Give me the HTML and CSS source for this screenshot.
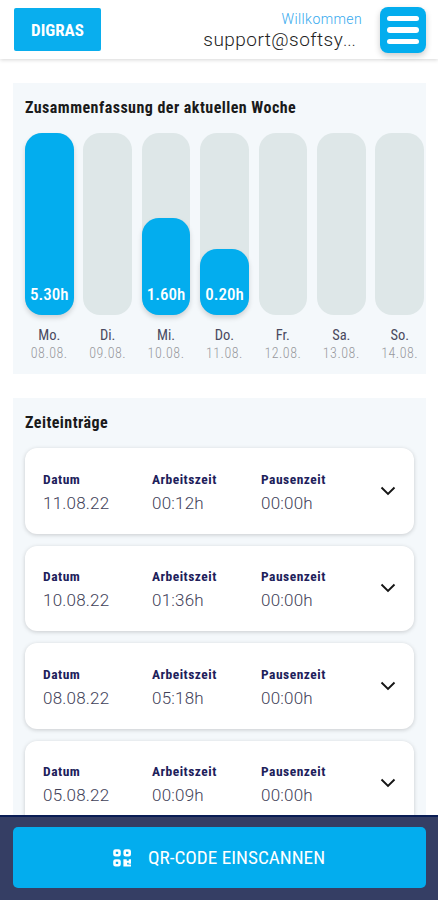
FILE: index.html
```html
<!DOCTYPE html>
<html lang="de">
<head>
  <meta charset="UTF-8">
  <meta name="viewport" content="width=device-width, initial-scale=1.0">
  <title>DIGRAS</title>
  <link rel="stylesheet" href="styles.css">
</head>
<body>

  <header class="header">
    <div class="logo">DIGRAS</div>
    <div class="user">
      <div class="welcome">Willkommen</div>
      <div class="email">support@softsy<span class="dots">...</span></div>
    </div>
    <button class="menu-btn" aria-label="Menü">
      <span></span>
      <span></span>
      <span></span>
    </button>
  </header>

  <main class="content">
    <section class="panel summary">
      <h2>Zusammenfassung der aktuellen Woche</h2>
      <div class="week">
        <div class="day">
          <div class="bar"><div class="fill" style="height: 100%">5.30h</div></div>
          <div class="name">Mo.</div>
          <div class="date">08.08.</div>
        </div>
        <div class="day">
          <div class="bar"></div>
          <div class="name">Di.</div>
          <div class="date">09.08.</div>
        </div>
        <div class="day">
          <div class="bar"><div class="fill" style="height: 53.3%">1.60h</div></div>
          <div class="name">Mi.</div>
          <div class="date">10.08.</div>
        </div>
        <div class="day">
          <div class="bar"><div class="fill" style="height: 36%">0.20h</div></div>
          <div class="name">Do.</div>
          <div class="date">11.08.</div>
        </div>
        <div class="day">
          <div class="bar"></div>
          <div class="name">Fr.</div>
          <div class="date">12.08.</div>
        </div>
        <div class="day">
          <div class="bar"></div>
          <div class="name">Sa.</div>
          <div class="date">13.08.</div>
        </div>
        <div class="day">
          <div class="bar"></div>
          <div class="name">So.</div>
          <div class="date">14.08.</div>
        </div>
      </div>
    </section>

    <section class="panel entries">
      <h2>Zeiteinträge</h2>
      <div class="entry">
        <div class="col"><div class="label">Datum</div><div class="value">11.08.22</div></div>
        <div class="col"><div class="label">Arbeitszeit</div><div class="value">00:12h</div></div>
        <div class="col"><div class="label">Pausenzeit</div><div class="value">00:00h</div></div>
        <svg class="chevron" viewBox="0 0 16 10"><path d="M1.5 1.500 8 8l6.500-6.500"/></svg>
      </div>
      <div class="entry">
        <div class="col"><div class="label">Datum</div><div class="value">10.08.22</div></div>
        <div class="col"><div class="label">Arbeitszeit</div><div class="value">01:36h</div></div>
        <div class="col"><div class="label">Pausenzeit</div><div class="value">00:00h</div></div>
        <svg class="chevron" viewBox="0 0 16 10"><path d="M1.5 1.500 8 8l6.500-6.500"/></svg>
      </div>
      <div class="entry">
        <div class="col"><div class="label">Datum</div><div class="value">08.08.22</div></div>
        <div class="col"><div class="label">Arbeitszeit</div><div class="value">05:18h</div></div>
        <div class="col"><div class="label">Pausenzeit</div><div class="value">00:00h</div></div>
        <svg class="chevron" viewBox="0 0 16 10"><path d="M1.5 1.500 8 8l6.500-6.500"/></svg>
      </div>
      <div class="entry">
        <div class="col"><div class="label">Datum</div><div class="value">05.08.22</div></div>
        <div class="col"><div class="label">Arbeitszeit</div><div class="value">00:09h</div></div>
        <div class="col"><div class="label">Pausenzeit</div><div class="value">00:00h</div></div>
        <svg class="chevron" viewBox="0 0 16 10"><path d="M1.5 1.500 8 8l6.500-6.500"/></svg>
      </div>
    </section>
  </main>

  <footer class="footer">
    <button class="scan-btn">
      <svg class="qr" viewBox="0 0 19 18">
        <g fill="none" stroke="#fff" stroke-width="2.600">
          <rect x="1.500" y="1.500" width="5" height="4.700" rx="1"/>
          <rect x="11.700" y="1.500" width="5" height="4.700" rx="1"/>
          <rect x="1.500" y="11.500" width="5" height="4.700" rx="1"/>
        </g>
        <path fill="#fff" d="M10.400 10.200h3.300v1.500h2.100v-1.500H18v4.500h-2.300v-1h-1.600v1.800H18v2h-7.600z"/>
      </svg>
      <span>QR-CODE EINSCANNEN</span>
    </button>
  </footer>

</body>
</html>
```
FILE: styles.css
```css
* {
  box-sizing: border-box;
}

body {
  margin: 0;
  height: 100vh;
  display: flex;
  flex-direction: column;
  overflow: hidden;
  background-color: #fff;
  font-family: "Roboto Condensed", Roboto, sans-serif;
  font-stretch: 75%;
}

button {
  border: none;
  padding: 0;
  font: inherit;
  cursor: pointer;
}

.header {
  flex: none;
  height: 59px;
  display: flex;
  align-items: flex-start;
  padding: 7px 12px 0 14px;
  box-shadow: 0 1px 4px rgba(0, 0, 0, 0.16);
}

.logo {
  width: 87px;
  height: 43px;
  margin-top: 1px;
  border-radius: 2px;
  background-color: #09aeee;
  color: #fff;
  font-size: 17px;
  font-weight: 700;
  line-height: 44px;
  text-align: center;
}

.user {
  margin-left: auto;
  margin-right: 18px;
  text-align: right;
  font-family: Roboto, sans-serif;
  font-stretch: 100%;
}

.welcome {
  margin-top: 3px;
  color: #35a9ee;
  font-size: 14px;
  font-weight: 300;
  line-height: 18px;
  letter-spacing: 0.4px;
}

.email {
  margin-right: 6px;
  color: #222;
  font-size: 19px;
  font-weight: 350;
  line-height: 23px;
  letter-spacing: 0.45px;
}

.dots {
  font-weight: 300;
  font-size: 16px;
}

.menu-btn {
  width: 46px;
  height: 46px;
  display: flex;
  flex-direction: column;
  align-items: center;
  justify-content: center;
  gap: 6px;
  border-radius: 8px;
  background-color: #03adee;
  box-shadow: 0 3px 6px rgba(0, 0, 0, 0.2);
}

.menu-btn span {
  width: 32px;
  height: 5.5px;
  border-radius: 3px;
  background-color: #fff;
}

.content {
  flex: 1;
  min-height: 0;
  overflow: hidden;
  padding: 24px 12px 0 13px;
}

.panel {
  padding: 0 12px;
  background-color: #f4f8fb;
}

.panel h2 {
  margin: 0;
  color: #1a1a1a;
  font-size: 16px;
  font-weight: 700;
  line-height: 50px;
  letter-spacing: 0.46px;
}

.summary {
  height: 291px;
  margin-bottom: 24px;
  padding-right: 2px;
}

.week {
  display: flex;
  justify-content: space-between;
}

.day {
  width: 48.5px;
  text-align: center;
}

.bar {
  height: 182px;
  display: flex;
  align-items: flex-end;
  margin-bottom: 11px;
  border-radius: 17px;
  background-color: #dee7e8;
}

.fill {
  width: 100%;
  display: flex;
  align-items: flex-end;
  justify-content: center;
  padding-bottom: 11px;
  border-radius: 17px;
  background-color: #03adee;
  box-shadow: 0 3px 5px rgba(0, 0, 0, 0.15);
  color: #fff;
  font-size: 17px;
  font-weight: 500;
  line-height: 20px;
}

.name {
  color: #4a4a60;
  font-size: 14.5px;
  line-height: 20px;
}

.date {
  color: #98999d;
  font-size: 14px;
  font-weight: 300;
  line-height: 14px;
  letter-spacing: 0.5px;
}

.entry {
  height: 85.5px;
  display: flex;
  align-items: center;
  margin-bottom: 12px;
  padding: 0 18px;
  border-radius: 12px;
  background-color: #fff;
  box-shadow: 0 1px 4px rgba(0, 0, 0, 0.18);
}

.col {
  width: 109px;
}

.label {
  margin-top: 3px;
  color: #20205a;
  font-size: 13.5px;
  font-weight: 700;
  line-height: 22px;
  letter-spacing: 0.5px;
}

.value {
  color: #414158;
  font-family: Roboto, sans-serif;
  font-stretch: 100%;
  font-size: 17px;
  font-weight: 300;
  line-height: 27px;
  letter-spacing: 0.2px;
}

.chevron {
  width: 16px;
  height: 10px;
  margin-left: auto;
  fill: none;
  stroke: #151515;
  stroke-width: 1.9;
}

.footer {
  flex: none;
  height: 85px;
  padding: 10px 12px 0 13px;
  border-top: 2px solid #0a1d55;
  background-color: #353e64;
}

.scan-btn {
  width: 100%;
  height: 61px;
  display: flex;
  align-items: center;
  justify-content: center;
  gap: 16px;
  padding-right: 1px;
  border-radius: 5px;
  background-color: #03adee;
  color: #fff;
  font-size: 19.2px;
  font-weight: 450;
}

.qr {
  width: 19px;
  height: 18px;
}
```
